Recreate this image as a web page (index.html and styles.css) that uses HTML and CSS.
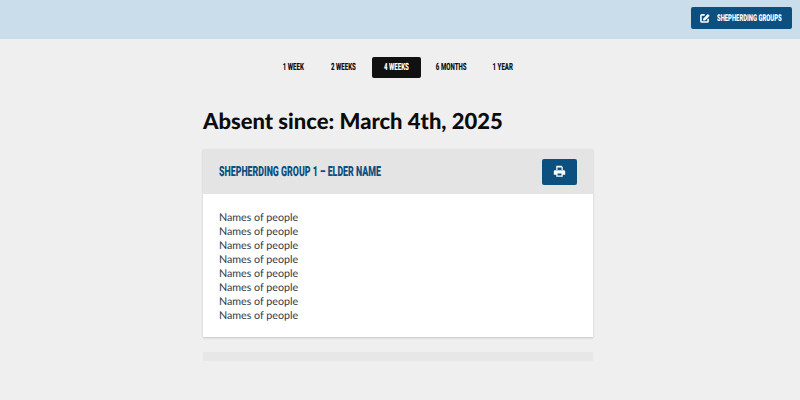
FILE: index.html
```html
<!DOCTYPE html>
<html lang="en">
<head>
<meta charset="utf-8">
<title>Absent since</title>
<link rel="stylesheet" href="styles.css">
</head>
<body>
<header class="topbar">
  <a class="btn-groups" href="#">
    <svg class="icon-edit" viewBox="0 0 16 16" width="10" height="10" aria-hidden="true">
      <path d="M7.500 3H3a1.500 1.500 0 0 0-1.500 1.500V13A1.500 1.500 0 0 0 3 14.500h8.500A1.500 1.500 0 0 0 13 13V9" fill="none" stroke="#fff" stroke-width="2.500"/>
      <path d="M5 9 12.500 1.500l3 3-7.500 7.500H5z" fill="#fff"/>
    </svg>
    <span class="cond">SHEPHERDING GROUPS</span>
  </a>
</header>
<div class="page">
  <nav class="tabs">
    <a class="tab tab-1w" href="#"><span class="cond">1 WEEK</span></a>
    <a class="tab tab-2w" href="#"><span class="cond">2 WEEKS</span></a>
    <a class="tab tab-4w active" href="#"><span class="cond">4 WEEKS</span></a>
    <a class="tab tab-6m" href="#"><span class="cond">6 MONTHS</span></a>
    <a class="tab tab-1y" href="#"><span class="cond">1 YEAR</span></a>
  </nav>
  <main class="content">
    <h1 class="title">Absent since: March 4th, 2025</h1>
    <section class="card">
      <div class="card-head">
        <h2 class="card-title"><span class="cond">SHEPHERDING GROUP 1 – ELDER NAME</span></h2>
        <a class="btn-print" href="#" aria-label="Print">
          <svg viewBox="0 0 16 16" width="13" height="13" aria-hidden="true">
            <path fill="#fff" d="M4 1h6.500L12 2.500V6H10.500V3H5.500V6H4zM2.500 6.500h11A1.500 1.500 0 0 1 15 8v4h-3v2.500H4V12H1V8a1.500 1.500 0 0 1 1.500-1.500zM5.500 10.500v2.500h5v-2.500z"/>
          </svg>
        </a>
      </div>
      <ul class="names">
        <li>Names of people</li>
        <li>Names of people</li>
        <li>Names of people</li>
        <li>Names of people</li>
        <li>Names of people</li>
        <li>Names of people</li>
        <li>Names of people</li>
        <li>Names of people</li>
      </ul>
    </section>
    <div class="card-stub"></div>
  </main>
</div>
</body>
</html>
```
FILE: styles.css
```css
* { box-sizing: border-box; }
html, body { margin: 0; height: 100%; }
body {
  background: #efefef;
  font-family: "Lato", sans-serif;
  color: #333842;
  overflow: hidden;
  text-rendering: geometricPrecision;
}
a { text-decoration: none; }
.cond {
  display: inline-block;
  flex: none;
  white-space: nowrap;
  font-family: "Roboto", sans-serif;
  font-weight: 900;
  transform: scaleX(.61);
}
.topbar {
  height: 39px;
  background: #c9deea;
  display: flex;
  justify-content: flex-end;
  align-items: flex-start;
  padding: 7px 8px 0 0;
}
.btn-groups {
  width: 101px;
  height: 22px;
  background: #0b507f;
  border-radius: 2px;
  color: #fff;
  display: flex;
  align-items: center;
  gap: 7px;
  padding-left: 9px;
  font-size: 9.5px;
}
.icon-edit { flex: none; }
.btn-groups .cond { transform-origin: left center; transform: scaleX(.62); }
.page { padding-right: 4px; }
.tabs {
  display: flex;
  justify-content: center;
  gap: 4px;
  margin-top: 18px;
  height: 21px;
}
.tab {
  height: 21px;
  display: flex;
  align-items: center;
  justify-content: center;
  color: #111;
  font-size: 10px;
  border-radius: 2px;
}
.tab-1w { width: 44px; }
.tab-2w { width: 48px; }
.tab-4w { width: 49px; }
.tab-6m { width: 53px; }
.tab-1y { width: 43px; }
.tab.active { background: #111; color: #fff; }
.content {
  width: 390px;
  margin: 0 auto;
}
.title {
  margin: 26px 0 0;
  height: 33px;
  font: 900 22px/33px "Lato", sans-serif;
  color: #0c0c0c;
  white-space: nowrap;
}
.card {
  margin-top: 12px;
  background: #fff;
  box-shadow: 0 1px 2px rgba(0,0,0,.18);
}
.card-head {
  height: 45px;
  background: #e4e4e4;
  display: flex;
  align-items: center;
  justify-content: space-between;
  padding: 0 16px;
}
.card-title {
  margin: 0;
  font-size: 14px;
  line-height: 16px;
  color: #0b507f;
}
.card-title .cond { transform-origin: left center; transform: scaleX(.63); }
.btn-print {
  width: 35px;
  height: 26px;
  background: #0b507f;
  border-radius: 2px;
  display: flex;
  align-items: center;
  justify-content: center;
}
.names {
  list-style: none;
  margin: 0;
  padding: 17px 16px 14px;
  font-size: 10.7px;
  line-height: 14px;
}
.card-stub {
  margin-top: 15px;
  height: 9px;
  background: #e7e7e7;
}
```
